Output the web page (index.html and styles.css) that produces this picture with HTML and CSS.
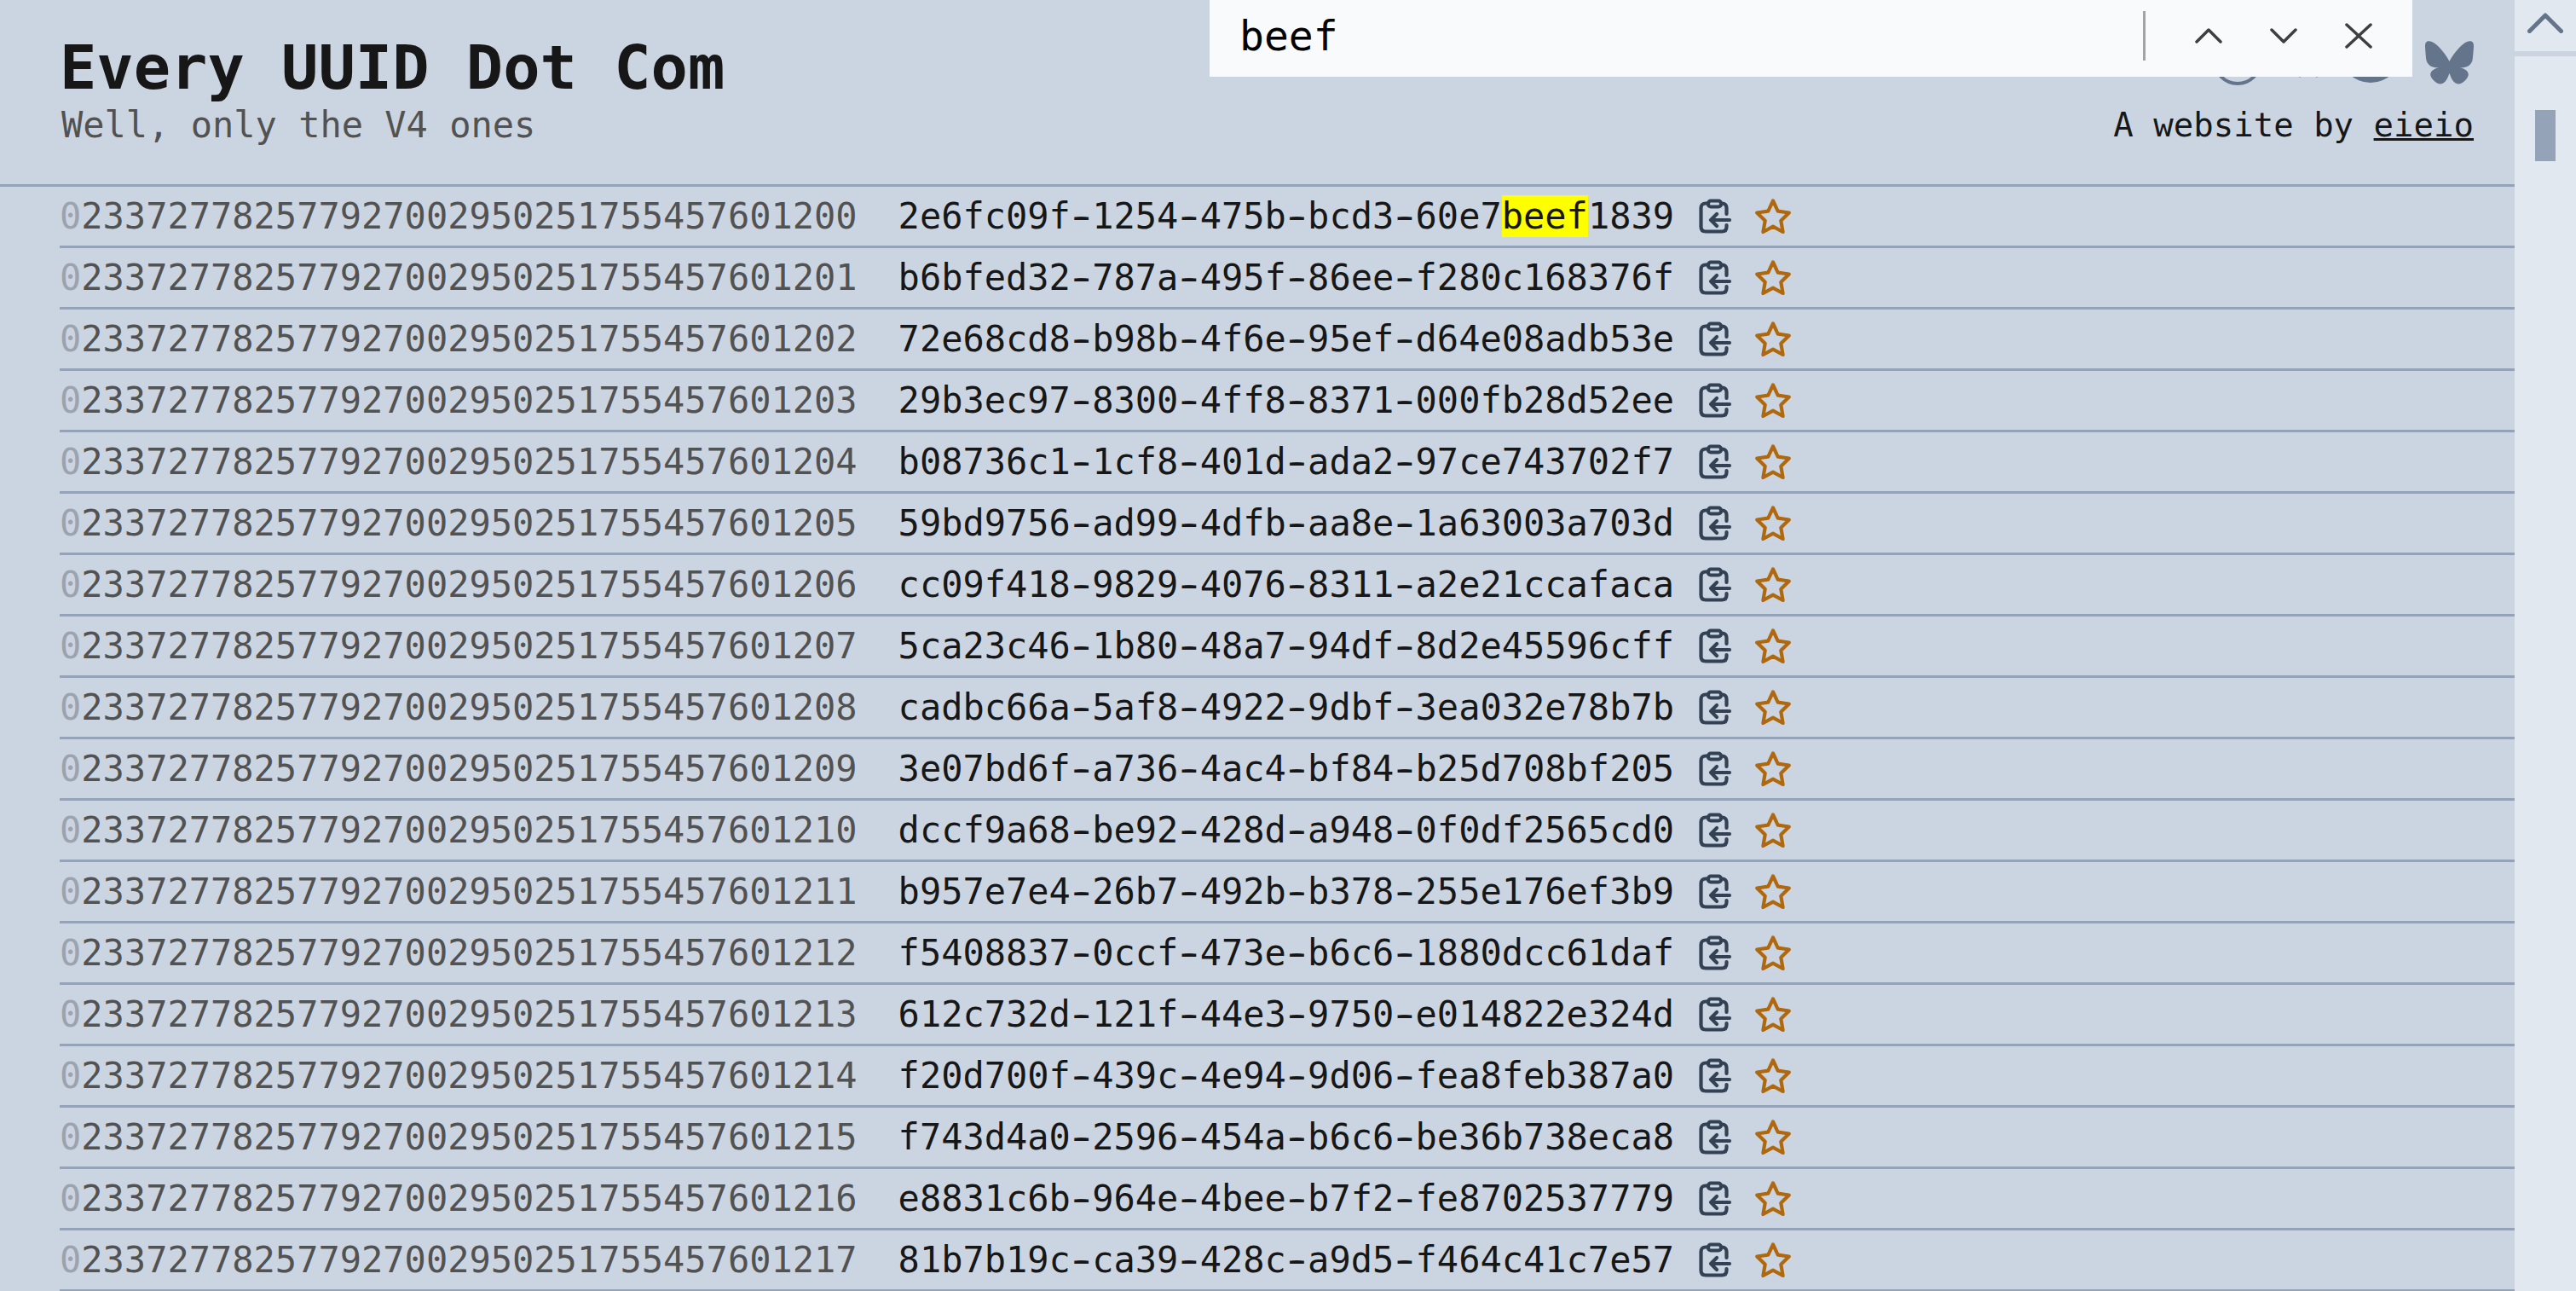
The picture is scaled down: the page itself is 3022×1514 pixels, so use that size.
FILE: index.html
```html
<!DOCTYPE html>
<html lang="en">
<head>
<meta charset="utf-8">
<title>Every UUID Dot Com</title>
<link rel="stylesheet" href="styles.css">
</head>
<body>
<div class="page">
  <main class="content">
    <header class="header">
      <div class="brand">
        <h1 class="title">Every UUID Dot Com</h1>
        <p class="subtitle">Well, only the V4 ones</p>
      </div>
      <div class="about">
        <div class="socials">
          <svg class="social ring" viewBox="0 0 58 58"><circle cx="29" cy="29" r="27" fill="none" stroke="#64748b" stroke-width="4"/></svg>
          <svg class="social mid" viewBox="0 0 52 52"><path d="M16 48V52M36 48V52" stroke="#94a3b8" stroke-width="2"/></svg>
          <svg class="social solid" viewBox="0 0 72 72"><circle cx="36" cy="36" r="36" fill="#64748b"/></svg>
          <svg class="butterfly" viewBox="0 0 568 501"><path d="M123.121 33.664C188.241 82.553 258.281 181.68 284 234.873c25.719-53.192 95.759-152.32 160.879-201.21C491.866-1.611 568-28.906 568 57.947c0 17.346-9.945 145.713-15.778 166.555-20.275 72.453-94.155 90.933-159.875 79.748C507.222 323.8 536.444 388.56 473.333 453.32c-119.86 122.992-172.272-30.859-185.702-70.281-2.462-7.227-3.614-10.608-3.631-7.733-.017-2.875-1.169.506-3.631 7.733-13.43 39.422-65.842 193.273-185.702 70.281-63.111-64.76-33.89-129.52 80.986-149.071-65.72 11.185-139.6-7.295-159.875-79.748C9.945 203.659 0 75.291 0 57.946 0-28.906 76.135-1.612 123.121 33.664Z" fill="#64748b"/></svg>
        </div>
        <p class="byline">A website by <a class="author" href="#">eieio</a></p>
      </div>
    </header>
    <ul class="rows" id="rows">
      <li class="row"><span class="num"><span class="lead">0</span>233727782577927002950251755457601200</span><span class="uuid">2e6fc09f<span class="dash">-</span>1254<span class="dash">-</span>475b<span class="dash">-</span>bcd3<span class="dash">-</span>60e7<mark class="hit">beef</mark>1839</span><svg class="ico"><use href="#clip"/></svg><svg class="ico"><use href="#star"/></svg></li>
      <li class="row"><span class="num"><span class="lead">0</span>233727782577927002950251755457601201</span><span class="uuid">b6bfed32<span class="dash">-</span>787a<span class="dash">-</span>495f<span class="dash">-</span>86ee<span class="dash">-</span>f280c168376f</span><svg class="ico"><use href="#clip"/></svg><svg class="ico"><use href="#star"/></svg></li>
      <li class="row"><span class="num"><span class="lead">0</span>233727782577927002950251755457601202</span><span class="uuid">72e68cd8<span class="dash">-</span>b98b<span class="dash">-</span>4f6e<span class="dash">-</span>95ef<span class="dash">-</span>d64e08adb53e</span><svg class="ico"><use href="#clip"/></svg><svg class="ico"><use href="#star"/></svg></li>
      <li class="row"><span class="num"><span class="lead">0</span>233727782577927002950251755457601203</span><span class="uuid">29b3ec97<span class="dash">-</span>8300<span class="dash">-</span>4ff8<span class="dash">-</span>8371<span class="dash">-</span>000fb28d52ee</span><svg class="ico"><use href="#clip"/></svg><svg class="ico"><use href="#star"/></svg></li>
      <li class="row"><span class="num"><span class="lead">0</span>233727782577927002950251755457601204</span><span class="uuid">b08736c1<span class="dash">-</span>1cf8<span class="dash">-</span>401d<span class="dash">-</span>ada2<span class="dash">-</span>97ce743702f7</span><svg class="ico"><use href="#clip"/></svg><svg class="ico"><use href="#star"/></svg></li>
      <li class="row"><span class="num"><span class="lead">0</span>233727782577927002950251755457601205</span><span class="uuid">59bd9756<span class="dash">-</span>ad99<span class="dash">-</span>4dfb<span class="dash">-</span>aa8e<span class="dash">-</span>1a63003a703d</span><svg class="ico"><use href="#clip"/></svg><svg class="ico"><use href="#star"/></svg></li>
      <li class="row"><span class="num"><span class="lead">0</span>233727782577927002950251755457601206</span><span class="uuid">cc09f418<span class="dash">-</span>9829<span class="dash">-</span>4076<span class="dash">-</span>8311<span class="dash">-</span>a2e21ccafaca</span><svg class="ico"><use href="#clip"/></svg><svg class="ico"><use href="#star"/></svg></li>
      <li class="row"><span class="num"><span class="lead">0</span>233727782577927002950251755457601207</span><span class="uuid">5ca23c46<span class="dash">-</span>1b80<span class="dash">-</span>48a7<span class="dash">-</span>94df<span class="dash">-</span>8d2e45596cff</span><svg class="ico"><use href="#clip"/></svg><svg class="ico"><use href="#star"/></svg></li>
      <li class="row"><span class="num"><span class="lead">0</span>233727782577927002950251755457601208</span><span class="uuid">cadbc66a<span class="dash">-</span>5af8<span class="dash">-</span>4922<span class="dash">-</span>9dbf<span class="dash">-</span>3ea032e78b7b</span><svg class="ico"><use href="#clip"/></svg><svg class="ico"><use href="#star"/></svg></li>
      <li class="row"><span class="num"><span class="lead">0</span>233727782577927002950251755457601209</span><span class="uuid">3e07bd6f<span class="dash">-</span>a736<span class="dash">-</span>4ac4<span class="dash">-</span>bf84<span class="dash">-</span>b25d708bf205</span><svg class="ico"><use href="#clip"/></svg><svg class="ico"><use href="#star"/></svg></li>
      <li class="row"><span class="num"><span class="lead">0</span>233727782577927002950251755457601210</span><span class="uuid">dccf9a68<span class="dash">-</span>be92<span class="dash">-</span>428d<span class="dash">-</span>a948<span class="dash">-</span>0f0df2565cd0</span><svg class="ico"><use href="#clip"/></svg><svg class="ico"><use href="#star"/></svg></li>
      <li class="row"><span class="num"><span class="lead">0</span>233727782577927002950251755457601211</span><span class="uuid">b957e7e4<span class="dash">-</span>26b7<span class="dash">-</span>492b<span class="dash">-</span>b378<span class="dash">-</span>255e176ef3b9</span><svg class="ico"><use href="#clip"/></svg><svg class="ico"><use href="#star"/></svg></li>
      <li class="row"><span class="num"><span class="lead">0</span>233727782577927002950251755457601212</span><span class="uuid">f5408837<span class="dash">-</span>0ccf<span class="dash">-</span>473e<span class="dash">-</span>b6c6<span class="dash">-</span>1880dcc61daf</span><svg class="ico"><use href="#clip"/></svg><svg class="ico"><use href="#star"/></svg></li>
      <li class="row"><span class="num"><span class="lead">0</span>233727782577927002950251755457601213</span><span class="uuid">612c732d<span class="dash">-</span>121f<span class="dash">-</span>44e3<span class="dash">-</span>9750<span class="dash">-</span>e014822e324d</span><svg class="ico"><use href="#clip"/></svg><svg class="ico"><use href="#star"/></svg></li>
      <li class="row"><span class="num"><span class="lead">0</span>233727782577927002950251755457601214</span><span class="uuid">f20d700f<span class="dash">-</span>439c<span class="dash">-</span>4e94<span class="dash">-</span>9d06<span class="dash">-</span>fea8feb387a0</span><svg class="ico"><use href="#clip"/></svg><svg class="ico"><use href="#star"/></svg></li>
      <li class="row"><span class="num"><span class="lead">0</span>233727782577927002950251755457601215</span><span class="uuid">f743d4a0<span class="dash">-</span>2596<span class="dash">-</span>454a<span class="dash">-</span>b6c6<span class="dash">-</span>be36b738eca8</span><svg class="ico"><use href="#clip"/></svg><svg class="ico"><use href="#star"/></svg></li>
      <li class="row"><span class="num"><span class="lead">0</span>233727782577927002950251755457601216</span><span class="uuid">e8831c6b<span class="dash">-</span>964e<span class="dash">-</span>4bee<span class="dash">-</span>b7f2<span class="dash">-</span>fe8702537779</span><svg class="ico"><use href="#clip"/></svg><svg class="ico"><use href="#star"/></svg></li>
      <li class="row"><span class="num"><span class="lead">0</span>233727782577927002950251755457601217</span><span class="uuid">81b7b19c<span class="dash">-</span>ca39<span class="dash">-</span>428c<span class="dash">-</span>a9d5<span class="dash">-</span>f464c41c7e57</span><svg class="ico"><use href="#clip"/></svg><svg class="ico"><use href="#star"/></svg></li>
    </ul>
  </main>
  <aside class="scrollbar">
    <div class="scroll-up"><svg class="scroll-arrow" viewBox="0 0 42 24"><path d="M2.500 21.500 21 3 39.500 21.500" fill="none" stroke="#64748b" stroke-width="5" stroke-linecap="round" stroke-linejoin="round"/></svg></div>
    <div class="scroll-track"><div class="scroll-thumb"></div></div>
  </aside>
  <div class="findbar">
    <span class="find-text">beef</span>
    <span class="find-sep"></span>
    <svg class="find-ico" viewBox="0 0 32 32"><path d="M2 23 16 9 30 23" fill="none" stroke="#3f3f3f" stroke-width="3.500" stroke-linecap="round" stroke-linejoin="round"/></svg>
    <svg class="find-ico" viewBox="0 0 32 32"><path d="M2 9 16 23 30 9" fill="none" stroke="#3f3f3f" stroke-width="3.500" stroke-linecap="round" stroke-linejoin="round"/></svg>
    <svg class="find-ico" viewBox="0 0 32 32"><path d="M2 3 30 29M30 3 2 29" fill="none" stroke="#3f3f3f" stroke-width="3.500" stroke-linecap="round"/></svg>
  </div>
</div>
<svg class="defs" width="0" height="0">
  <symbol id="clip" viewBox="0 0 48 48">
    <g fill="none" stroke="#334155" stroke-width="4.200" stroke-linecap="round" stroke-linejoin="round">
      <path d="M17 8.500H14C10.500 8.500 8.500 10.500 8.500 14V36C8.500 39.500 10.500 41.500 14 41.500H33C36.500 41.500 38.500 39.500 38.500 36V34M38.500 21V14C38.500 10.500 36.500 8.500 33 8.500H32"/>
      <rect x="17" y="5.500" width="15" height="7" rx="3"/>
      <path d="M42 28H20M27 21 20 28 27 35"/>
    </g>
  </symbol>
  <symbol id="star" viewBox="0 0 48 48">
    <path d="M24 5.500 29.700 17.600 42.800 19.500 33.300 28.800 35.600 42 24 35.700 12.400 42 14.700 28.800 5.200 19.500 18.300 17.600Z" fill="none" stroke="#b0680f" stroke-width="4.200" stroke-linejoin="round"/>
  </symbol>
</svg>
</body>
</html>
```
FILE: styles.css
```css
* { box-sizing: border-box; }
html, body { margin: 0; padding: 0; height: 100%; overflow: hidden; }
body { font-family: "DejaVu Sans Mono", monospace; color: #171717; background: #cbd5e1; }
.page { display: flex; height: 1514px; position: relative; overflow: hidden; }
.content { flex: 1; min-width: 0; }
.header { height: 219px; border-bottom: 3px solid #94a3b8; display: flex; justify-content: space-between; padding: 37px 48px 0 70px; }
.title { margin: 0; font-size: 72px; line-height: 84px; font-weight: 700; color: #171717; }
.subtitle { margin: 2px 0 0; padding-left: 2px; font-size: 42px; line-height: 48px; color: #525252; }
.about { display: flex; flex-direction: column; align-items: flex-end; }
.socials { display: flex; align-items: flex-end; height: 63px; }
.social { flex: none; }
.ring { width: 58px; height: 58px; margin-right: 28px; }
.mid { width: 52px; height: 52px; margin: 0 11px 9px 0; }
.solid { width: 72px; height: 72px; margin: 0 28px 3px 0; }
.butterfly { width: 57px; height: 51px; margin-bottom: 1px; }
.byline { margin: 23px 0 0; font-size: 39px; line-height: 48px; }
.author { color: #171717; text-decoration: underline; }
.rows { list-style: none; margin: 0 0 0 70px; padding: 0; }
.row { height: 72px; border-bottom: 3px solid #94a3b8; display: flex; align-items: center; font-size: 42px; line-height: 48px; white-space: nowrap; }
.num { color: #525252; margin-right: 48px; }
.lead { color: #9ca3af; }
.uuid { color: #171717; margin-right: 23px; }
.dash { text-shadow: 3px 0 0 #171717, -3px 0 0 #171717; }
.hit { background: #ffff00; color: #171717; }
.ico { width: 48px; height: 48px; flex: none; margin-right: 21px; }
.scrollbar { width: 72px; flex: none; background: #e2e8f0; }
.scroll-up { height: 66px; border-bottom: 6px solid #cbd5e1; display: flex; justify-content: center; padding-top: 15px; }
.scroll-arrow { width: 42px; height: 24px; }
.scroll-track { padding-top: 63px; display: flex; justify-content: center; }
.scroll-thumb { width: 24px; height: 60px; background: #94a3b8; }
.findbar { position: absolute; left: 1419px; top: 0; width: 1411px; height: 90px; background: #f8fafc; display: flex; align-items: center; padding: 0 0 6px 35px; }
.find-text { flex: none; width: 1060px; font-size: 48px; color: #000; }
.find-sep { flex: none; width: 3px; height: 58px; background: #a3a3a3; margin-right: 58px; }
.find-ico { flex: none; width: 32px; height: 32px; margin-right: 56px; }
.defs { position: absolute; }
```
